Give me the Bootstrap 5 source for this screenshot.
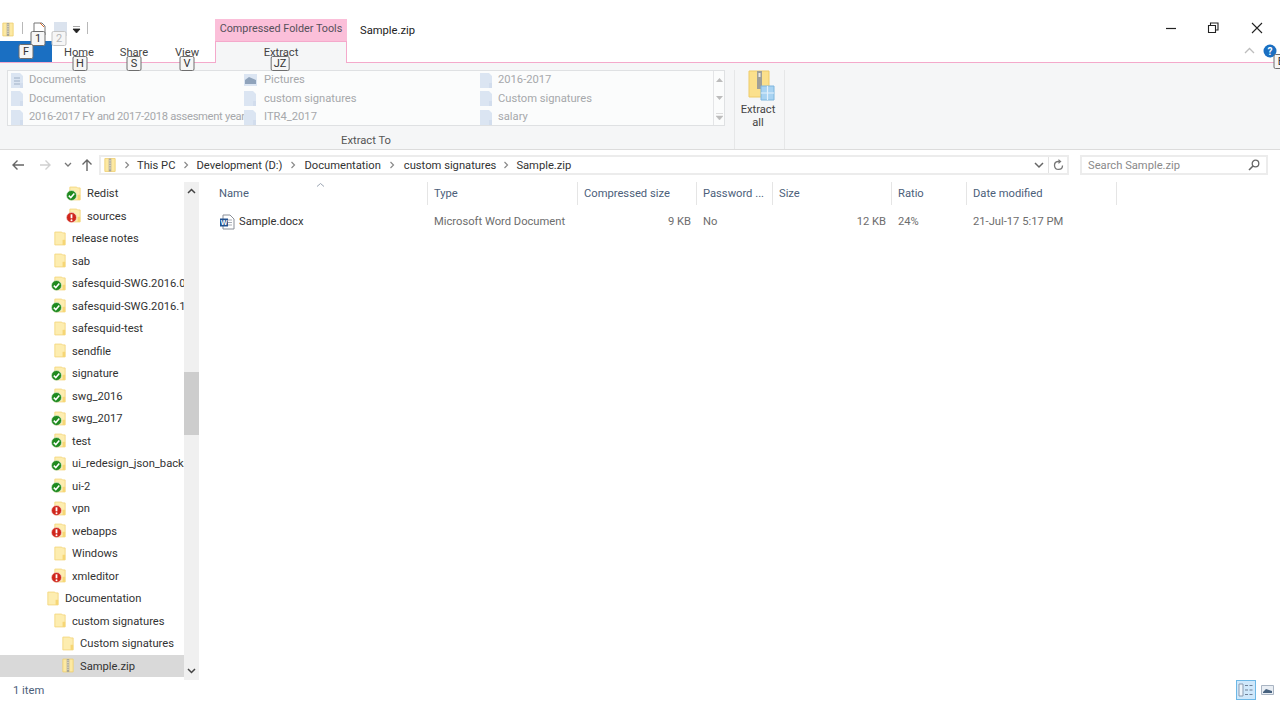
<!DOCTYPE html>
<html lang="en">
<head>
<meta charset="utf-8">
<title>Sample.zip</title>
<link href="https://cdn.jsdelivr.net/npm/bootstrap@5.3.0/dist/css/bootstrap.min.css" rel="stylesheet">
<style>
html,body{height:720px;overflow:hidden;background:#fff}
body{font-family:Roboto,"Noto Sans","Liberation Sans",sans-serif;font-size:11.2px;line-height:16px;color:#3a3f4a}
.shell{width:1280px;height:720px;position:relative;overflow:hidden}
/* title + tabs */
.topband{height:63px;border-bottom:1px solid #f4a9cb}
.leftcol{width:215px;flex:none}
.qat{height:41px;padding-top:22px}
.qat svg,.qat .qsep{flex:none}
.qsep{width:1px;height:12px;background:#b8b8b8}
.qi1{margin-left:2px}.qs1{margin-left:8px}.qi2{margin-left:10px}.qi3{margin-left:8px}.qi4{margin-left:5px;margin-top:4px}.qs2{margin-left:6px}
.tabsline{height:21px}
.filetab{width:52px;height:21px;background:#1a6fc2}
.tabword{color:#444;text-align:center;line-height:24px}
.tw1{width:54px}.tw2{width:56px}.tw3{width:50px}
.ctxcol{width:132px;flex:none;padding-top:19px}
.ctxhead{height:22px;background:#fbbfd9;color:#55505a;text-align:center;line-height:19px;white-space:nowrap;font-size:10.800px}
.ctxtab{height:22px;background:#f5f6f7;border:1px solid #f4a9cb;border-bottom:0;text-align:center;line-height:21px;color:#444}
.doctitle{padding:23px 0 0 13px;color:#222}
.rightcol{width:130px;flex:none;margin-left:auto}
.winrow{height:44px;padding-top:20px}
.wincell{width:42px;height:16px;display:flex;justify-content:center}
.wincell.wide{width:46px}
.helprow{padding-left:88px}
.caretcell{width:22px;display:flex;justify-content:center;padding-top:3px}
.helpcell{width:20px;display:flex;justify-content:center}
/* ribbon */
.ribbonband{height:87px;background:#f5f6f7;border-bottom:1px solid #dcdcdc;padding:7px 0 0 7px}
.gallerybox{width:718px;height:56px;background:#fbfcfc;border:1px solid #dfe1e3}
.galleryrows{width:705px}
.gitem{height:18.500px;color:#a6a8ab;white-space:nowrap;display:flex;align-items:center}
.gcol1{width:236px;padding-left:3px}.gcol2{width:236px}.gcol3{width:233px}
.gitem svg{flex:none;margin-right:6px}
.gcol2 .gitem svg{margin-right:7px}
.tightline{letter-spacing:-.3px}
.gscroll{width:12px;border-left:1px solid #e4e5e7}
.gscroll div{height:18.300px;display:flex;align-items:center;justify-content:center}
.grouplabel{width:718px;text-align:center;color:#555;padding-top:7px}
.groupedge{width:51px;margin-left:9px;height:79px;border-left:1px solid #e6e7e8;border-right:1px solid #e6e7e8;line-height:12.500px;color:#444}
.groupedge svg{display:block;margin:0 0 2px 13px}
.extractcap{text-align:center;padding-right:3px}
/* address */
.addrband{height:32px;padding-top:5px}
.navcell{display:flex;align-items:center;justify-content:center;height:20px;flex:none}
.nc1{width:31px;padding-left:5px}.nc2{width:28px}.nc3{width:18px}.nc4{width:20px}.ncgap{width:2px}
.addrbox{width:970px;height:20px;border:2px solid #ececec;flex:none;color:#333}
.crumbs{flex:1;padding-left:3px}
.crumb{white-space:nowrap;padding-top:2px}
.sepchev{display:flex;justify-content:center;flex:none}
.sw0{width:21px}.sw1{width:21px}.sw2{width:22px}.sw3{width:23px}.sw4{width:20px}
.reloadcell{width:19px;border-left:1px solid #e2e2e2}
.seachbox{width:188px;height:20px;border:2px solid #ececec;margin-left:11px;flex:none;padding:0 6px;color:#8a8a8a}
.seachbox span{padding-top:2px}
/* body */
.midband{height:498px}
.treepane{width:184px;flex:none;overflow:hidden}
.treerow{height:22.500px;white-space:nowrap;overflow:hidden;color:#333}
.treerow span{padding-top:2px}
.treerow svg{flex:none;margin-right:6px;overflow:visible}
.lv1{padding-left:47px}.lv2{padding-left:54px}.lv3{padding-left:62px}.lv4{padding-left:69px}
.picked{background:#d9d9d9}
.treebar{width:15px;flex:none;background:#f0f0f0;height:498px}
.treethumb{height:63px;background:#cdcdcd;margin-top:172px}
.treearrow{height:18px;display:flex;align-items:center;justify-content:center}
.spacerbar{flex:1}
.listpane{padding-left:14px;position:relative;flex:1}
.colhead,.colrow{display:grid;grid-template-columns:215px 150px 119px 76px 119px 75px 150px;width:904px}
.colhead{height:23px}
.colhead div{border-right:1px solid #e5e5e5;padding-left:6px;color:#4c607a;line-height:24px;white-space:nowrap;overflow:hidden}
.sortcaret{position:absolute;left:117px;top:0}
.colrow{margin-top:5px;height:22px;line-height:24px;color:#6d6d6d}
.colrow>div{padding-left:6px;white-space:nowrap}
.colrow .numcell{text-align:right;padding-right:6px}
.colrow .filecell{color:#333;display:flex;align-items:center}
.filecell svg{margin-right:4px;flex:none}
/* status */
.statusband{height:40px;padding:3px 6px 0 13px;color:#4c607a}
.viewon{width:20px;height:20px;background:#cfe8fb;border:1px solid #6db8e6;margin:-3px 5px 0 0}
.viewoff{margin-top:2px}
/* key tips */
.keytip{position:absolute;height:15px;min-width:15px;padding:0 2px;background:#f6f6f6;border:1px solid #6e6e6e;border-radius:2px;line-height:13px;text-align:center;color:#333;font-size:11px;transform:translateX(-50%)}
.keytip.faded{color:#b5b5b5;border-color:#c4c4c4}
.kt1{left:38px;top:31px}.kt2{left:59px;top:31px}.kt3{left:26px;top:44px}.kt4{left:80px;top:56px}.kt5{left:134px;top:56px}.kt6{left:187px;top:56px}.kt7{left:280px;top:56px}.kt8{left:1281px;top:54px}
</style>
</head>
<body>
<svg width="0" height="0" class="d-none">
 <defs>
  <symbol id="fold" viewBox="0 0 14 17"><path d="M1 1h8l1 1h3v14H1z" fill="#fdedb0" stroke="#f3d67c"/><path d="M10 16V10h3v6z" fill="#f6d675"/></symbol>
  <symbol id="zipf" viewBox="0 0 14 17"><path d="M1 1h12v15H1z" fill="#fde9a2" stroke="#efcf70"/><path d="M5.500 1h3v15h-3z" fill="#a7a498"/><path d="M6 3h2M6 5h2M6 7h2M6 9h2M6 11h2M6 13h2" stroke="#e8e2c8"/></symbol>
  <symbol id="okbadge" viewBox="0 0 11 11"><circle cx="5.500" cy="5.500" r="5" fill="#1f8a1f" stroke="#e9f4e4" stroke-width=".6"/><path d="M2.800 5.600l2 2 3.500-4" fill="none" stroke="#fff" stroke-width="1.500"/></symbol>
  <symbol id="badbadge" viewBox="0 0 11 11"><circle cx="5.500" cy="5.500" r="5" fill="#d0261c" stroke="#f7e1dd" stroke-width=".6"/><path d="M5.500 2.300v4" stroke="#fff" stroke-width="1.800"/><circle cx="5.500" cy="8.200" r="1" fill="#fff"/></symbol>
  <symbol id="pale" viewBox="0 0 12 15"><path d="M0 0h9l3 3v12H0z" fill="#dbe5f2"/><path d="M9 10h3v5H9z" fill="#c9d6e8" opacity=".5"/></symbol>
  <symbol id="chev" viewBox="0 0 6 8"><path d="M1.500 1l3 3-3 3" fill="none" stroke="#8a8a8a" stroke-width="1.200"/></symbol>
 </defs>
</svg>

<div class="shell">
 <div class="topband d-flex">
  <div class="leftcol">
   <div class="qat d-flex align-items-start">
    <svg class="qi1" width="12" height="15"><use href="#zipf" width="12" height="15"/></svg>
    <span class="qsep qs1"></span>
    <svg class="qi2" width="13" height="14" viewBox="0 0 13 14"><path d="M1 1h8l3 3v9H1z" fill="#fff" stroke="#777"/><path d="M7 1l4 4" stroke="#d56a2a"/></svg>
    <svg class="qi3" width="13" height="14" viewBox="0 0 13 14"><path d="M0 0h13v14H0z" fill="#dbe3ee"/></svg>
    <svg class="qi4" width="9" height="8" viewBox="0 0 9 8"><path d="M1 0h7M1 3h7L4.500 7z" fill="#222" stroke="#222" stroke-width=".8"/></svg>
    <span class="qsep qs2"></span>
   </div>
   <div class="tabsline d-flex">
    <div class="filetab"></div>
    <div class="tabword tw1">Home</div>
    <div class="tabword tw2">Share</div>
    <div class="tabword tw3">View</div>
   </div>
  </div>
  <div class="ctxcol">
   <div class="ctxhead">Compressed Folder Tools</div>
   <div class="ctxtab">Extract</div>
  </div>
  <div class="doctitle">Sample.zip</div>
  <div class="rightcol">
   <div class="winrow d-flex">
    <div class="wincell"><svg width="16" height="16" viewBox="0 0 16 16"><path d="M3 8.500h10" stroke="#222" stroke-width="1.200"/></svg></div>
    <div class="wincell"><svg width="16" height="16" viewBox="0 0 16 16"><path d="M3.500 5.500h7v7h-7zM5.500 5.500v-2.500h7.500v7h-2.500" fill="none" stroke="#222" stroke-width="1.100"/></svg></div>
    <div class="wincell wide"><svg width="16" height="16" viewBox="0 0 16 16"><path d="M3 3l10 10M13 3L3 13" stroke="#222" stroke-width="1.100"/></svg></div>
   </div>
   <div class="helprow d-flex">
    <div class="caretcell"><svg width="11" height="7" viewBox="0 0 11 7"><path d="M1 6l4.500-4.500L10 6" fill="none" stroke="#bdbdbd" stroke-width="1.300"/></svg></div>
    <div class="helpcell"><svg width="14" height="14" viewBox="0 0 14 14"><circle cx="7" cy="7" r="6.500" fill="#1a6fc2"/><text x="7" y="10.500" font-size="10" font-weight="700" text-anchor="middle" fill="#fff" font-family="Roboto">?</text></svg></div>
   </div>
  </div>
 </div>

 <div class="ribbonband d-flex align-items-start">
  <div>
   <div class="gallerybox d-flex">
    <div class="galleryrows d-flex">
     <div class="gcol1">
      <div class="gitem"><svg width="12" height="15" viewBox="0 0 12 15"><use href="#pale" width="12" height="15"/><path d="M3 5h6M3 8h6M3 11h6" stroke="#9fb0c6"/></svg>Documents</div>
      <div class="gitem"><svg width="12" height="15"><use href="#pale" width="12" height="15"/></svg>Documentation</div>
      <div class="gitem tightline"><svg width="12" height="15"><use href="#pale" width="12" height="15"/></svg>2016-2017 FY and 2017-2018 assesment year</div>
     </div>
     <div class="gcol2">
      <div class="gitem"><svg width="13" height="12" viewBox="0 0 13 12"><path d="M0 0h13v12H0z" fill="#dbe5f2"/><path d="M1 6l4-3 7 3v4H1z" fill="#8fa3bb"/></svg>Pictures</div>
      <div class="gitem"><svg width="13" height="15"><use href="#pale" width="12" height="15"/></svg>custom signatures</div>
      <div class="gitem"><svg width="13" height="15"><use href="#pale" width="12" height="15"/></svg>ITR4_2017</div>
     </div>
     <div class="gcol3">
      <div class="gitem"><svg width="12" height="15"><use href="#pale" width="12" height="15"/></svg>2016-2017</div>
      <div class="gitem"><svg width="12" height="15"><use href="#pale" width="12" height="15"/></svg>Custom signatures</div>
      <div class="gitem"><svg width="12" height="15"><use href="#pale" width="12" height="15"/></svg>salary</div>
     </div>
    </div>
    <div class="gscroll">
     <div><svg width="7" height="4" viewBox="0 0 7 4"><path d="M3.500 0L7 4H0z" fill="#bcbcbc"/></svg></div>
     <div><svg width="7" height="4" viewBox="0 0 7 4"><path d="M3.500 4L7 0H0z" fill="#bcbcbc"/></svg></div>
     <div><svg width="7" height="7" viewBox="0 0 7 7"><path d="M0 .5h7M3.500 7L7 3H0z" fill="#bcbcbc" stroke="#bcbcbc" stroke-width=".5"/></svg></div>
    </div>
   </div>
   <div class="grouplabel">Extract To</div>
  </div>
  <div class="groupedge">
   <svg width="27" height="32" viewBox="0 0 27 32"><path d="M1 1h20v26H1z" fill="#fbe08c" stroke="#eecb68"/><path d="M9 1h5v18H9z" fill="#9f9f98"/><path d="M10.500 3h2v4h-2z" fill="#e8e8e8"/><path d="M13 16h13v14H13z" fill="#a8d3f2" stroke="#7fb6de"/><path d="M19.500 16v14M13 23h13" stroke="#e3f1fb" stroke-width="1.200"/></svg>
   <div class="extractcap">Extract<br>all</div>
  </div>
 </div>

 <div class="addrband d-flex">
  <div class="navcell nc1"><svg width="14" height="12" viewBox="0 0 14 12"><path d="M13 6H2M6.500 1.500L2 6l4.500 4.500" fill="none" stroke="#666" stroke-width="1.400"/></svg></div>
  <div class="navcell nc2"><svg width="13" height="12" viewBox="0 0 13 12"><path d="M1 6h10M6.500 1.500L11 6l-4.500 4.500" fill="none" stroke="#d0d0d0" stroke-width="1.400"/></svg></div>
  <div class="navcell nc3"><svg width="8" height="6" viewBox="0 0 8 6"><path d="M1 1l3 3 3-3" fill="none" stroke="#777" stroke-width="1.300"/></svg></div>
  <div class="navcell nc4"><svg width="12" height="14" viewBox="0 0 12 14"><path d="M6 13V2M1.500 6.500L6 2l4.500 4.500" fill="none" stroke="#666" stroke-width="1.400"/></svg></div>
  <div class="ncgap"></div>
  <div class="addrbox d-flex align-items-center">
   <div class="crumbs d-flex align-items-center">
    <svg width="12" height="16"><use href="#zipf" width="12" height="16"/></svg>
    <span class="sepchev sw0"><svg width="6" height="8"><use href="#chev" width="6" height="8"/></svg></span>
    <span class="crumb">This PC</span>
    <span class="sepchev sw1"><svg width="6" height="8"><use href="#chev" width="6" height="8"/></svg></span>
    <span class="crumb">Development (D:)</span>
    <span class="sepchev sw2"><svg width="6" height="8"><use href="#chev" width="6" height="8"/></svg></span>
    <span class="crumb">Documentation</span>
    <span class="sepchev sw3"><svg width="6" height="8"><use href="#chev" width="6" height="8"/></svg></span>
    <span class="crumb">custom signatures</span>
    <span class="sepchev sw4"><svg width="6" height="8"><use href="#chev" width="6" height="8"/></svg></span>
    <span class="crumb">Sample.zip</span>
   </div>
   <svg width="10" height="7" viewBox="0 0 10 7" class="me-1"><path d="M1 1l4 4 4-4" fill="none" stroke="#666" stroke-width="1.500"/></svg>
   <div class="reloadcell h-100 d-flex align-items-center justify-content-center">
    <svg width="11" height="12" viewBox="0 0 11 12"><path d="M9.500 6.500A4 4 0 1 1 5 2.500H7" fill="none" stroke="#777" stroke-width="1.300"/><path d="M5.500 0l3 2.500-3 2.500z" fill="#777"/></svg>
   </div>
  </div>
  <div class="seachbox d-flex align-items-center justify-content-between">
   <span>Search Sample.zip</span>
   <svg width="12" height="12" viewBox="0 0 12 12"><circle cx="7.500" cy="4.500" r="3.300" fill="none" stroke="#666" stroke-width="1.300"/><path d="M5 7l-4 4" stroke="#666" stroke-width="1.600"/></svg>
  </div>
 </div>

 <div class="midband d-flex">
  <div class="treepane" id="tree"></div>
  <div class="treebar d-flex flex-column">
   <div class="treearrow"><svg width="9" height="6" viewBox="0 0 9 6"><path d="M1 5l3.500-3.500L8 5" fill="none" stroke="#444" stroke-width="1.500"/></svg></div>
   <div class="treethumb"></div>
   <div class="spacerbar"></div>
   <div class="treearrow"><svg width="9" height="6" viewBox="0 0 9 6"><path d="M1 1l3.500 3.500L8 1" fill="none" stroke="#444" stroke-width="1.500"/></svg></div>
  </div>
  <div class="listpane">
   <svg class="sortcaret" width="9" height="5" viewBox="0 0 9 5"><path d="M1 4.500l3.500-3L8 4.500" fill="none" stroke="#9aa4b2"/></svg>
   <div class="colhead">
    <div>Name</div><div>Type</div><div>Compressed size</div><div>Password ...</div><div>Size</div><div>Ratio</div><div>Date modified</div>
   </div>
   <div class="colrow">
    <div class="filecell"><svg width="16" height="16" viewBox="0 0 16 16"><path d="M4 1h7l4 4v10H4z" fill="#fff" stroke="#8a8f98"/><path d="M7 6h6M7 8.500h6M7 11h6" stroke="#a8adb5"/><path d="M1 4.500h8v8H1z" fill="#24528f"/><text x="5" y="11" font-size="7" font-weight="700" text-anchor="middle" fill="#fff" font-family="Liberation Sans">W</text></svg><span>Sample.docx</span></div>
    <div>Microsoft Word Document</div>
    <div class="numcell">9 KB</div>
    <div>No</div>
    <div class="numcell">12 KB</div>
    <div>24%</div>
    <div>21-Jul-17 5:17 PM</div>
   </div>
  </div>
 </div>

 <div class="statusband d-flex">
  <div class="me-auto">1 item</div>
  <div class="viewon d-flex align-items-center justify-content-center">
   <svg width="16" height="14" viewBox="0 0 16 14"><path d="M1 1h4v12H1z" fill="#eef5fb" stroke="#8a9bb0"/><path d="M7 2.500h3M11.500 2.500h3M7 7h3M11.500 7h3M7 11.500h3M11.500 11.500h3" stroke="#6f8096" stroke-width="1.200"/></svg>
  </div>
  <svg class="viewoff" width="13" height="10" viewBox="0 0 13 10"><path d="M.5.500h12v9H.5z" fill="#e9eef4" stroke="#a9b4c2"/><path d="M2 7l3-3 6 2v2H2z" fill="#47627f"/></svg>
 </div>

 <span class="keytip kt1">1</span>
 <span class="keytip faded kt2">2</span>
 <span class="keytip kt3">F</span>
 <span class="keytip kt4">H</span>
 <span class="keytip kt5">S</span>
 <span class="keytip kt6">V</span>
 <span class="keytip kt7">JZ</span>
 <span class="keytip kt8">E</span>
</div>

<script>
var rows=[["Redist",4,"ok"],["sources",4,"bad"],["release notes",2,""],["sab",2,""],["safesquid-SWG.2016.09",2,"ok"],["safesquid-SWG.2016.11",2,"ok"],["safesquid-test",2,""],["sendfile",2,""],["signature",2,"ok"],["swg_2016",2,"ok"],["swg_2017",2,"ok"],["test",2,"ok"],["ui_redesign_json_backup",2,"ok"],["ui-2",2,"ok"],["vpn",2,"bad"],["webapps",2,"bad"],["Windows",2,""],["xmleditor",2,"bad"],["Documentation",1,""],["custom signatures",2,""],["Custom signatures",3,""],["Sample.zip",3,"zip"]];
var h="";
rows.forEach(function(r){
 var ic=r[2]=="zip"?"zipf":"fold";
 var b=r[2]=="ok"?'okbadge':r[2]=="bad"?'badbadge':'';
 h+='<div class="treerow d-flex align-items-center lv'+r[1]+(r[2]=="zip"?" picked":"")+'"><svg width="12" height="17"><use href="#'+ic+'" width="12" height="17"/>'+(b?'<use href="#'+b+'" x="-3" y="5" width="11" height="11"/>':'')+'</svg><span>'+r[0]+'</span></div>';
});
document.getElementById("tree").innerHTML=h;
</script>
<script src="https://cdn.jsdelivr.net/npm/bootstrap@5.3.0/dist/js/bootstrap.bundle.min.js"></script>
</body>
</html>
